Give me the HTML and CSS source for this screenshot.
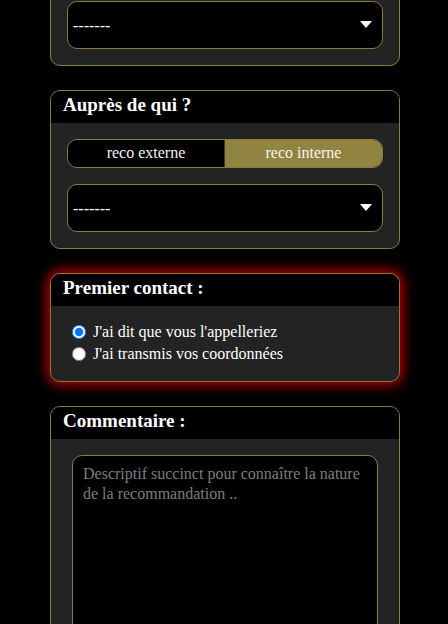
FILE: index.html
```html
<!DOCTYPE html>
<html lang="fr">
<head>
<meta charset="utf-8">
<title>Recommandation</title>
<link rel="stylesheet" href="styles.css">
</head>
<body>
<main class="page">
  <section class="card card-first">
    <div class="card-body">
      <div class="select">
        <span class="select-value">-------</span>
        <svg class="select-arrow" width="12" height="7" viewBox="0 0 12 7"><path d="M0 0H12L6 7Z" fill="#fff"/></svg>
      </div>
    </div>
  </section>

  <section class="card">
    <h2 class="card-head">Auprès de qui ?</h2>
    <div class="card-body stack">
      <div class="toggle">
        <span class="toggle-btn">reco externe</span>
        <span class="toggle-btn active">reco interne</span>
      </div>
      <div class="select">
        <span class="select-value">-------</span>
        <svg class="select-arrow" width="12" height="7" viewBox="0 0 12 7"><path d="M0 0H12L6 7Z" fill="#fff"/></svg>
      </div>
    </div>
  </section>

  <section class="card card-glow">
    <h2 class="card-head">Premier contact :</h2>
    <div class="card-body radios">
      <label class="radio"><input type="radio" name="contact" checked> J'ai dit que vous l'appelleriez</label>
      <label class="radio"><input type="radio" name="contact"> J'ai transmis vos coordonnées</label>
    </div>
  </section>

  <section class="card">
    <h2 class="card-head">Commentaire :</h2>
    <div class="card-body">
      <textarea class="comment" placeholder="Descriptif succinct pour connaître la nature de la recommandation .."></textarea>
    </div>
  </section>
</main>
</body>
</html>
```

FILE: styles.css
```css
html, body {
  margin: 0;
  padding: 0;
  background: #000;
}
body {
  font-family: "Liberation Serif", "Times New Roman", serif;
  font-size: 16px;
  color: #fff;
  overflow: hidden;
}
.page {
  width: 350px;
  margin: -16px 0 0 50px;
  display: flex;
  flex-direction: column;
  gap: 24px;
}
.card {
  border: 1px solid #8a7b3a;
  border-radius: 10px;
  background: #232323;
  overflow: hidden;
}
.card-glow {
  box-shadow: 0 0 12px 3px #b80000;
}
.card-head {
  margin: 0;
  background: #000;
  font-size: 19px;
  font-weight: bold;
  line-height: 20px;
  padding: 4px 12px 8px;
  color: #fff;
}
.card-body {
  padding: 16px;
}
.stack {
  display: flex;
  flex-direction: column;
  gap: 16px;
}
.select {
  height: 48px;
  box-sizing: border-box;
  border: 1px solid #8a7b3a;
  border-radius: 10px;
  background: #000;
  display: flex;
  align-items: center;
  justify-content: space-between;
  padding: 2px 10px 0 5px;
}
.select-value {
  color: #fff;
  font-size: 16px;
}
.select-arrow {
  display: block;
  margin-top: -4px;
}
.toggle {
  height: 29px;
  box-sizing: border-box;
  border: 1px solid #8a7b3a;
  border-radius: 10px;
  overflow: hidden;
  display: grid;
  grid-template-columns: 1fr 1fr;
}
.toggle-btn {
  display: flex;
  align-items: center;
  justify-content: center;
  background: #000;
  color: #f2f2f2;
  font-size: 16px;
  padding-bottom: 2px;
  border-right: 1px solid #3a3a3a;
}
.toggle-btn.active {
  background: #918440;
  border-right: 0;
  color: #f4f4f4;
}
.radios {
  display: flex;
  flex-direction: column;
  padding: 15px 16px 16px 17px;
}
.radio {
  line-height: 22px;
  font-size: 16px;
  color: #fff;
}
.radio input {
  width: 14px;
  height: 14px;
  margin: 0 3px 0 4px;
  vertical-align: -2px;
}
.comment {
  display: block;
  box-sizing: border-box;
  width: 306px;
  height: 220px;
  margin: 0 auto;
  border: 1px solid #8a7b3a;
  border-radius: 10px;
  background: #000;
  color: #fff;
  font-family: "Liberation Serif", "Times New Roman", serif;
  font-size: 16px;
  line-height: 20px;
  padding: 8px 10px;
  resize: none;
}
.comment::placeholder {
  color: #7d7d7d;
}
```
